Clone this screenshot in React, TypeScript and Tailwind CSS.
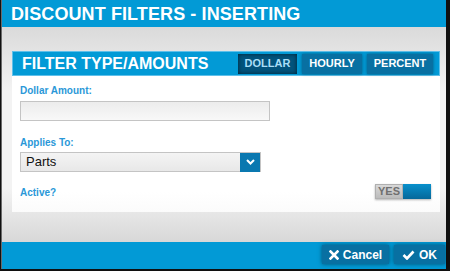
import React from "react";

export default function App() {
  return (
    <div
      className="w-[450px] h-[271px] bg-[#101010] flex"
      style={{ fontFamily: '"Liberation Sans", Arial, sans-serif' }}
    >
      <div className="flex flex-col w-[445px] h-[269px] ml-[1px] border-l border-l-[#6a6a6a] -ml-0">
        <div className="h-[27px] bg-[#029ad6] flex items-center pl-[9px] pt-[1px]">
          <span className="text-white font-bold text-[18px] leading-none tracking-[0.1px]">
            DISCOUNT FILTERS - INSERTING
          </span>
        </div>
        <div className="flex-1 bg-[linear-gradient(to_bottom,#dadada,#f3f3f3_30%,#f3f3f3_75%,#d8d8d8)] pt-[24px] pl-[10px]">
          <div className="w-[428px]">
            <div className="h-[25px] bg-[#029ad6] flex items-center justify-between pl-[9px] pr-[6px] border border-[#5fc0ea]">
              <span className="text-white font-bold text-[16px] leading-none">FILTER TYPE/AMOUNTS</span>
              <div className="flex gap-[5px]">
                <div className="w-[59px] h-[20px] bg-[#02537c] shadow-[inset_0_0_4px_rgba(0,0,0,0.6)] flex items-center justify-center text-[11px] font-bold text-[#a9def7]">
                  DOLLAR
                </div>
                <div className="w-[60px] h-[20px] bg-[#0870a2] shadow-[0_0_3px_rgba(0,0,0,0.4)] flex items-center justify-center text-[11px] font-bold text-white">
                  HOURLY
                </div>
                <div className="w-[66px] h-[20px] bg-[#0870a2] shadow-[0_0_3px_rgba(0,0,0,0.4)] flex items-center justify-center text-[11px] font-bold text-white">
                  PERCENT
                </div>
              </div>
            </div>
            <div className="h-[136px] bg-[linear-gradient(to_bottom,#ffffff_85%,#fbfbfb)] pl-[8px] pr-[9px] pt-[9px] flex flex-col">
              <div className="text-[10px] leading-[12px] font-bold text-[#2a98d8]">Dollar Amount:</div>
              <div className="mt-[4px] w-[250px] h-[20px] border border-[#c4c4c4] bg-[linear-gradient(to_bottom,#ececec,#f8f8f8)]"></div>
              <div className="mt-[16px] text-[10px] leading-[12px] font-bold text-[#2a98d8]">Applies To:</div>
              <div className="mt-[3px] w-[241px] h-[20px] border border-[#c4c4c4] bg-[linear-gradient(to_bottom,#f4f4f4,#e8e8e8)] flex items-center">
                <span className="flex-1 pl-[5px] text-[13px] text-[#111]">Parts</span>
                <div className="w-[20px] h-[19px] bg-[#0a78b0] flex items-center justify-center">
                  <svg width="9" height="6" viewBox="0 0 9 6">
                    <path d="M1 1 L4.5 4.5 L8 1" stroke="white" strokeWidth="2" fill="none" />
                  </svg>
                </div>
              </div>
              <div className="mt-[15px] flex items-center justify-between">
                <span className="text-[10px] leading-[12px] font-bold text-[#2a98d8]">Active?</span>
                <div className="flex h-[15px] shadow-[0_1px_2px_rgba(0,0,0,0.3)] -mt-[4px]">
                  <div className="w-[28px] bg-[linear-gradient(to_bottom,#d8d8d8,#bcbcbc)] border border-[#b0b0b0] flex items-center justify-center text-[11px] font-bold text-[#707070]">
                    YES
                  </div>
                  <div className="w-[28px] bg-[linear-gradient(to_bottom,#0890cc,#06689a)]"></div>
                </div>
              </div>
            </div>
          </div>
        </div>
        <div className="h-[27px] bg-[#029ad6] flex items-start justify-end gap-[5px] pt-[3px] pr-[1px]">
          <div className="w-[67px] h-[19px] bg-[#0870a2] shadow-[0_0_4px_rgba(0,0,0,0.5)] flex items-center justify-center gap-[4px] text-white font-bold text-[12px]">
            <svg width="10" height="10" viewBox="0 0 10 10">
              <path d="M1.5 1.5 L8.5 8.5 M8.5 1.5 L1.5 8.5" stroke="white" strokeWidth="2.6" strokeLinecap="square" />
            </svg>
            <span>Cancel</span>
          </div>
          <div className="w-[51px] h-[19px] bg-[#0870a2] shadow-[0_0_4px_rgba(0,0,0,0.5)] flex items-center justify-center gap-[4px] text-white font-bold text-[12px]">
            <svg width="13" height="10" viewBox="0 0 13 10">
              <path d="M1.5 5 L5 8.5 L11.5 1.5" stroke="white" strokeWidth="2.6" fill="none" />
            </svg>
            <span>OK</span>
          </div>
        </div>
      </div>
    </div>
  );
}
